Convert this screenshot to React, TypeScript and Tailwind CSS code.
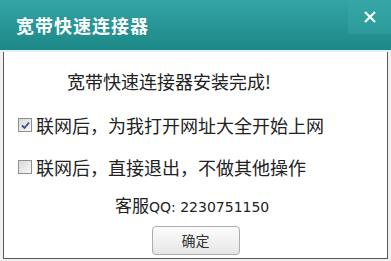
import React from 'react';

const CJK = '"Noto Sans CJK SC", "Microsoft YaHei", sans-serif';

function CheckBox({ checked }: { checked: boolean }) {
  return (
    <span className="flex h-[14px] w-[14px] shrink-0 items-center justify-center border border-[#8e8f8f] bg-gradient-to-br from-[#d8d8d8] to-[#f8f8f8]">
      {checked && (
        <svg width="9" height="9" viewBox="0 0 9 9">
          <path d="M1 4.5 L3.5 7 L8 1.5" fill="none" stroke="#3b4d8c" strokeWidth="1.8" />
        </svg>
      )}
    </span>
  );
}

export default function App() {
  return (
    <div className="h-[261px] w-[391px] overflow-hidden bg-[#f0f0f0]" style={{ fontFamily: CJK }}>
      {/* Title bar */}
      <div className="flex h-[50px] items-stretch bg-gradient-to-b from-[#34a4a4] to-[#1c8888]">
        <div className="flex flex-1 items-center pl-4 text-[18px] font-bold tracking-[1px] text-white">
          宽带快速连接器
        </div>
        <div className="flex h-[34px] w-[43px] items-center justify-center bg-[#3aaaa9]/40">
          <svg width="12" height="12" viewBox="0 0 12 12">
            <path d="M1 1 L11 11 M11 1 L1 11" stroke="#ffffff" strokeWidth="2.2" />
          </svg>
        </div>
      </div>
      <div className="h-[2px] bg-[#dff1f1]" />

      {/* Body */}
      <div className="mx-[3px] flex h-[207px] flex-col border-x border-b border-[#5a5a5a] bg-white text-[#222]">
        <p className="mt-[17px] pl-[63px] text-[18px] leading-[24px]">宽带快速连接器安装完成!</p>

        <label className="mt-[20px] flex items-center gap-[4px] pl-[14px] text-[18px] leading-[24px]">
          <CheckBox checked />
          联网后，为我打开网址大全开始上网
        </label>

        <label className="mt-[18px] flex items-center gap-[4px] pl-[14px] text-[18px] leading-[24px]">
          <CheckBox checked={false} />
          联网后，直接退出，不做其他操作
        </label>

        <p className="mt-[14px] pl-[111px] text-[17px] leading-[24px]">
          客服
          <span className="text-[14px]" style={{ fontFamily: '"DejaVu Sans", Tahoma, sans-serif' }}>
            QQ: 2230751150
          </span>
        </p>

        <div className="mt-[7px] flex justify-center">
          <button className="h-[29px] w-[88px] rounded-[4px] border border-[#acacac] bg-gradient-to-b from-[#fdfdfd] to-[#e6e6e6] text-[14px] text-[#333]">
            确定
          </button>
        </div>
      </div>
    </div>
  );
}
